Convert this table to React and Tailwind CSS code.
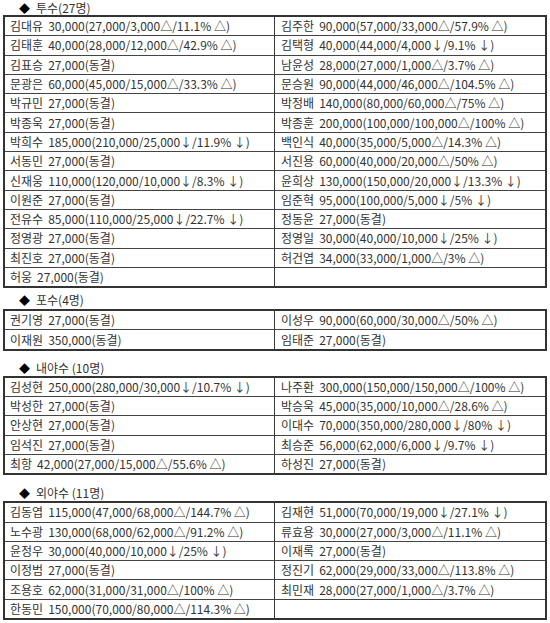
import React from "react";

const sections = [
  {
    title: "투수(27명)",
    pt: "pt-0",
    h: "h-[15px]",
    rows: [
      ["김대유 30,000(27,000/3,000△/11.1% △)", "김주한 90,000(57,000/33,000△/57.9% △)"],
      ["김태훈 40,000(28,000/12,000△/42.9% △)", "김택형 40,000(44,000/4,000↓/9.1% ↓)"],
      ["김표승 27,000(동결)", "남윤성 28,000(27,000/1,000△/3.7% △)"],
      ["문광은 60,000(45,000/15,000△/33.3% △)", "문승원 90,000(44,000/46,000△/104.5% △)"],
      ["박규민 27,000(동결)", "박정배 140,000(80,000/60,000△/75% △)"],
      ["박종욱 27,000(동결)", "박종훈 200,000(100,000/100,000△/100% △)"],
      ["박희수 185,000(210,000/25,000↓/11.9% ↓)", "백인식 40,000(35,000/5,000△/14.3% △)"],
      ["서동민 27,000(동결)", "서진용 60,000(40,000/20,000△/50% △)"],
      ["신재웅 110,000(120,000/10,000↓/8.3% ↓)", "윤희상 130,000(150,000/20,000↓/13.3% ↓)"],
      ["이원준 27,000(동결)", "임준혁 95,000(100,000/5,000↓/5% ↓)"],
      ["전유수 85,000(110,000/25,000↓/22.7% ↓)", "정동윤 27,000(동결)"],
      ["정영광 27,000(동결)", "정영일 30,000(40,000/10,000↓/25% ↓)"],
      ["최진호 27,000(동결)", "허건엽 34,000(33,000/1,000△/3% △)"],
      ["허웅 27,000(동결)", ""],
    ],
  },
  {
    title: "포수(4명)",
    pt: "pt-[4px]",
    h: "h-[21px]",
    rows: [
      ["권기영 27,000(동결)", "이성우 90,000(60,000/30,000△/50% △)"],
      ["이재원 350,000(동결)", "임태준 27,000(동결)"],
    ],
  },
  {
    title: "내야수 (10명)",
    pt: "pt-[9px]",
    h: "h-[25px]",
    rows: [
      ["김성현 250,000(280,000/30,000↓/10.7% ↓)", "나주환 300,000(150,000/150,000△/100% △)"],
      ["박성한 27,000(동결)", "박승욱 45,000(35,000/10,000△/28.6% △)"],
      ["안상현 27,000(동결)", "이대수 70,000(350,000/280,000↓/80% ↓)"],
      ["임석진 27,000(동결)", "최승준 56,000(62,000/6,000↓/9.7% ↓)"],
      ["최항 42,000(27,000/15,000△/55.6% △)", "하성진 27,000(동결)"],
    ],
  },
  {
    title: "외야수 (11명)",
    pt: "pt-[10px]",
    h: "h-[26px]",
    rows: [
      ["김동엽 115,000(47,000/68,000△/144.7% △)", "김재현 51,000(70,000/19,000↓/27.1% ↓)"],
      ["노수광 130,000(68,000/62,000△/91.2% △)", "류효용 30,000(27,000/3,000△/11.1% △)"],
      ["윤정우 30,000(40,000/10,000↓/25% ↓)", "이재록 27,000(동결)"],
      ["이정범 27,000(동결)", "정진기 62,000(29,000/33,000△/113.8% △)"],
      ["조용호 62,000(31,000/31,000△/100% △)", "최민재 28,000(27,000/1,000△/3.7% △)"],
      ["한동민 150,000(70,000/80,000△/114.3% △)", ""],
    ],
  },
];

function Cell({ text, left }) {
  const i = text.indexOf(" ");
  const name = i >= 0 ? text.slice(0, i) : text;
  const rest = i >= 0 ? text.slice(i + 1) : "";
  return (
    <div
      className={
        "w-1/2 h-[18.3px] flex items-center whitespace-nowrap overflow-hidden " +
        (left ? "pl-[5px] border-r border-[#3a3a3a]" : "pl-[6px]")
      }
    >
      {text && (
        <>
          <span className="mr-[5px]">{name}</span>
          <span>{rest}</span>
        </>
      )}
    </div>
  );
}

export default function App() {
  return (
    <div
      className="w-[550px] h-[623px] bg-white text-[#333] text-[12px] leading-[16px] overflow-hidden"
      style={{ fontFamily: '"Noto Sans CJK KR", "Noto Sans", sans-serif' }}
    >
      {sections.map((s, si) => (
        <div key={si}>
          <div className={s.h + " " + s.pt + " flex items-start pl-[19px]"}>
            <span className="text-[11px] mr-[6px] text-black">◆</span>
            <span>{s.title}</span>
          </div>
          <div className="ml-[3px] w-[544px] border-2 border-[#333]">
            {s.rows.map((r, ri) => (
              <div
                key={ri}
                className={"flex " + (ri > 0 ? "border-t border-[#444]" : "")}
              >
                <Cell text={r[0]} left />
                <Cell text={r[1]} />
              </div>
            ))}
          </div>
        </div>
      ))}
    </div>
  );
}
